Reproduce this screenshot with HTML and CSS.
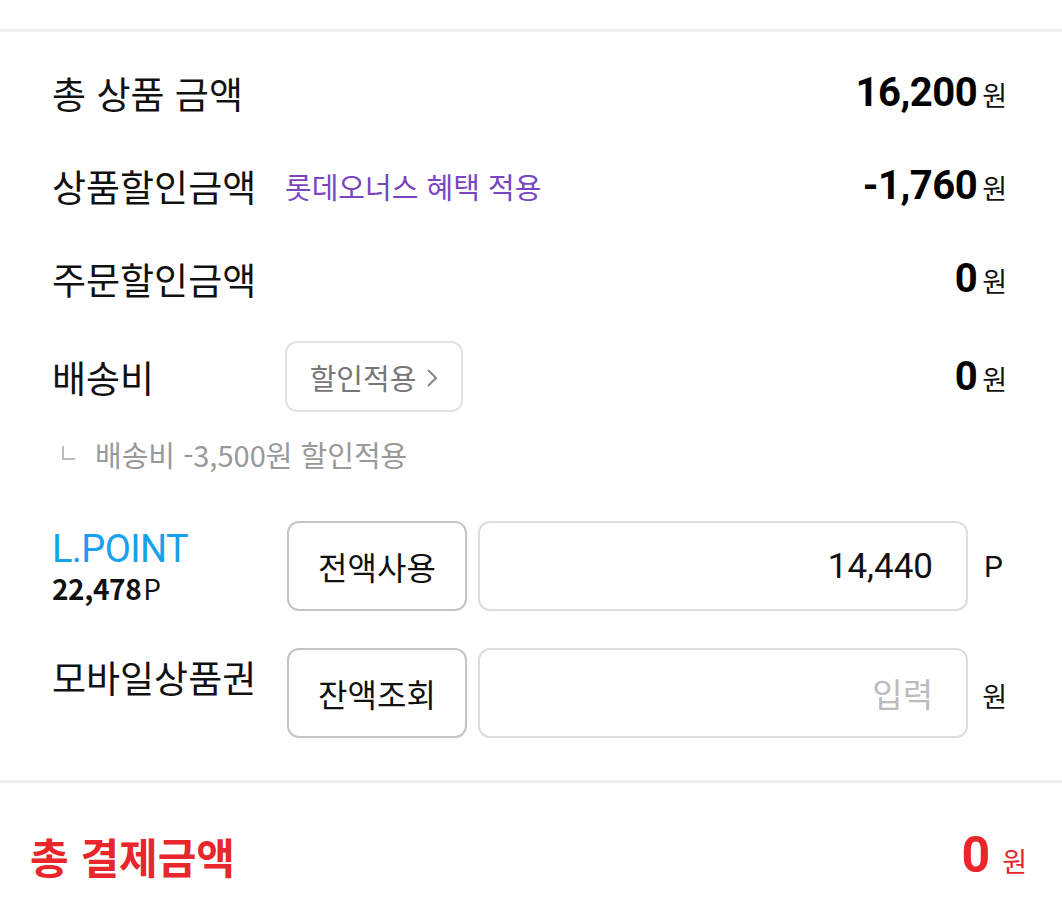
FILE: index.html
```html
<!DOCTYPE html>
<html lang="ko">
<head>
  <meta charset="UTF-8">
  <title>결제금액</title>
  <link rel="stylesheet" href="styles.css">
</head>
<body>

<div class="summary">
  <div class="row">
    <span class="label">총 상품 금액</span>
    <span class="amount"><b>16,200</b><i>원</i></span>
  </div>

  <div class="row">
    <span class="label">상품할인금액</span>
    <span class="benefit">롯데오너스 혜택 적용</span>
    <span class="amount"><b>-1,760</b><i>원</i></span>
  </div>

  <div class="row">
    <span class="label">주문할인금액</span>
    <span class="amount"><b>0</b><i>원</i></span>
  </div>

  <div class="row row-ship">
    <span class="label">배송비</span>
    <button class="chip">할인적용
      <svg class="chev" width="12" height="20" viewBox="0 0 12 20"><path d="M2 2 L10 10 L2 18" fill="none" stroke="#888" stroke-width="2"/></svg>
    </button>
    <span class="amount"><b>0</b><i>원</i></span>
  </div>

  <div class="note"><span class="corner"></span>배송비 -3,500원 할인적용</div>

  <div class="pay-row">
    <div class="label">
      <div class="lpoint">L.POINT</div>
      <div class="balance"><b>22,478</b>P</div>
    </div>
    <button class="btn">전액사용</button>
    <div class="field">14,440</div>
    <span class="unit unit-p">P</span>
  </div>

  <div class="pay-row pay-row-gift">
    <div class="label label-top">모바일상품권</div>
    <button class="btn">잔액조회</button>
    <div class="field placeholder">입력</div>
    <span class="unit">원</span>
  </div>
</div>

<div class="total">
  <span class="total-label">총 결제금액</span>
  <span class="total-amount"><b>0</b><i>원</i></span>
</div>

</body>
</html>
```

FILE: styles.css
```css
body {
  margin: 0;
  background: #fff;
  font-family: Roboto, "Noto Sans CJK KR", sans-serif;
  color: #111;
}
button {
  font-family: inherit;
  background: #fff;
  cursor: pointer;
}
.summary {
  margin-top: 29px;
  border-top: 3px solid #eee;
  border-bottom: 3px solid #eee;
  padding: 14px 55px 42px 52px;
}
.row {
  display: flex;
  align-items: center;
  height: 93px;
}
.label {
  width: 233px;
  flex-shrink: 0;
  font-family: "Noto Sans CJK KR", sans-serif;
  font-size: 37px;
  color: #111;
}
.benefit {
  font-family: "Noto Sans CJK KR", sans-serif;
  font-size: 29px;
  color: #7a45c0;
}
.amount {
  margin-left: auto;
  display: flex;
  align-items: baseline;
}
.amount b {
  font-size: 40px;
  font-weight: 700;
  color: #000;
  letter-spacing: -0.5px;
}
.amount i,
.total-amount i {
  font-style: normal;
  font-family: "Noto Sans CJK KR", sans-serif;
  font-size: 27px;
  margin-left: 5px;
}
.row-ship {
  height: 97px;
  margin-top: 3px;
}
.chip {
  height: 71px;
  width: 178px;
  border: 2px solid #e2e2e2;
  border-radius: 12px;
  font-family: "Noto Sans CJK KR", sans-serif;
  font-size: 29px;
  color: #777;
  padding: 0;
  display: flex;
  align-items: center;
  justify-content: center;
  gap: 10px;
}
.chev {
  margin-top: 2px;
}
.note {
  display: flex;
  align-items: center;
  margin: 8px 0 0 8px;
  font-family: "Noto Sans CJK KR", sans-serif;
  font-size: 29px;
  color: #999;
}
.corner {
  width: 11px;
  height: 12px;
  border-left: 2px solid #bbb;
  border-bottom: 2px solid #bbb;
  margin: 0 20px 2px 2px;
}
.pay-row {
  display: flex;
  align-items: center;
  margin-top: 46px;
}
.pay-row-gift {
  margin-top: 37px;
  align-items: flex-start;
}
.lpoint {
  font-family: Roboto, sans-serif;
  font-size: 38px;
  color: #17a0ec;
  line-height: 44px;
  letter-spacing: -0.6px;
}
.balance {
  font-size: 28px;
  line-height: 34px;
  color: #111;
}
.balance b {
  font-weight: 700;
  letter-spacing: -0.4px;
  margin-right: 2px;
}
.label-top {
  margin-top: 2px;
}
.btn {
  width: 180px;
  height: 90px;
  flex-shrink: 0;
  margin-left: 2px;
  border: 2px solid #c4c4c4;
  border-radius: 12px;
  font-family: "Noto Sans CJK KR", sans-serif;
  font-size: 32px;
  color: #111;
  padding: 0;
}
.field {
  width: 490px;
  height: 90px;
  box-sizing: border-box;
  margin-left: 11px;
  border: 2px solid #ddd;
  border-radius: 12px;
  display: flex;
  align-items: center;
  justify-content: flex-end;
  padding-right: 33px;
  font-size: 35px;
  color: #111;
}
.placeholder {
  font-family: "Noto Sans CJK KR", sans-serif;
  font-size: 33px;
  color: #bbb;
}
.unit {
  margin-left: auto;
  font-family: "Noto Sans CJK KR", sans-serif;
  font-size: 27px;
  color: #111;
}
.unit-p {
  font-family: Roboto, sans-serif;
  font-size: 30px;
  margin-right: 4px;
}
.pay-row-gift .unit {
  align-self: center;
  margin-top: 4px;
}
.total {
  display: flex;
  align-items: center;
  justify-content: space-between;
  height: 144px;
  padding: 0 35px 0 30px;
  color: #e8262b;
}
.total-label {
  font-family: "Noto Sans CJK KR", sans-serif;
  font-size: 42px;
  font-weight: 700;
}
.total-amount {
  display: flex;
  align-items: baseline;
}
.total-amount b {
  font-size: 50px;
  font-weight: 700;
}
.total-amount i {
  margin-left: 12px;
}
```
